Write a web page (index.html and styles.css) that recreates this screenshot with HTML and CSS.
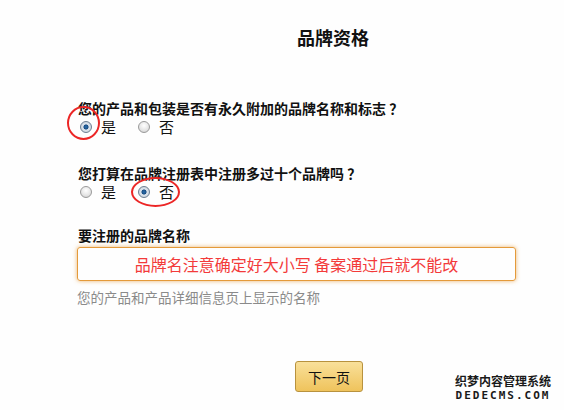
FILE: index.html
```html
<!doctype html>
<html lang="zh-CN">
<head>
    <meta charset="UTF-8">
    <title>品牌资格</title>
    <link rel="stylesheet" href="styles.css">
</head>
<body>
    <div class="page">
        <h1 class="title">品牌资格</h1>

        <div class="question">
            <p class="ask">您的产品和包装是否有永久附加的品牌名称和标志 ？</p>
            <div class="choices">
                <label class="choice"><span class="radio checked"></span>是</label>
                <label class="choice"><span class="radio"></span>否</label>
                <span class="mark markOne"></span>
            </div>
        </div>

        <div class="question second">
            <p class="ask">您打算在品牌注册表中注册多过十个品牌吗 ？</p>
            <div class="choices">
                <label class="choice"><span class="radio"></span>是</label>
                <label class="choice"><span class="radio checked"></span>否</label>
                <span class="mark markTwo"></span>
            </div>
        </div>

        <div class="field">
            <p class="ask">要注册的品牌名称</p>
            <div class="textBox">品牌名注意确定好大小写 备案通过后就不能改</div>
            <p class="hint">您的产品和产品详细信息页上显示的名称</p>
        </div>

        <div class="actions">
            <button class="next">下一页</button>
        </div>
    </div>

    <div class="logo">
        <span class="logoCn">织梦内容管理系统</span>
        <span class="logoEn">DEDECMS.COM</span>
    </div>
</body>
</html>
```

FILE: styles.css
```css
body{
    margin: 0;
    background-color: #fefefe;
    font-family: "Noto Sans CJK SC", "Liberation Sans", sans-serif;
    color: #111;
}
.page{
    padding: 24px 0 0 78px;
}
.title{
    margin: 0 0 0 219px;
    font-size: 18px;
    line-height: 26px;
    font-weight: bold;
}
.question{
    margin-top: 49px;
}
.question.second{
    margin-top: 27px;
}
.ask{
    margin: 0;
    font-size: 14px;
    line-height: 18px;
    font-weight: bold;
}
.choices{
    position: relative;
    display: flex;
    height: 20px;
    align-items: center;
    margin-left: 2px;
}
.choice{
    display: flex;
    align-items: center;
    width: 58px;
    font-size: 15px;
    line-height: 20px;
}
.radio{
    width: 12px;
    height: 12px;
    margin-right: 9px;
    border-radius: 50%;
    border: 1px solid #9a9a9a;
    background: radial-gradient(circle at 50% 35%, #ffffff 0, #e4e4e4 60%, #c9c9c9 100%);
    box-sizing: border-box;
}
.radio.checked{
    border-color: #6d7f92;
    background: radial-gradient(circle, #2c6fae 0, #1b4f85 30%, #dfe6ee 42%, #bfc8d2 100%);
}
.mark{
    position: absolute;
    border: 2px solid #ec2626;
    border-radius: 50%;
}
.markOne{
    left: -13px;
    top: -11px;
    width: 29px;
    height: 30px;
}
.markTwo{
    left: 51px;
    top: -5px;
    width: 45px;
    height: 26px;
}
.field{
    margin-top: 24px;
}
.textBox{
    width: 439px;
    height: 34px;
    margin: 3px 0 0 -1px;
    border: 1px solid #e49a3a;
    border-radius: 3px;
    box-shadow: 0 0 4px rgba(228, 150, 50, 0.7);
    box-sizing: border-box;
    text-align: center;
    font-size: 16px;
    line-height: 32px;
    color: #f33a3a;
}
.hint{
    margin: 7px 0 0 -1px;
    font-size: 13.5px;
    line-height: 18px;
    color: #8a8a8a;
}
.actions{
    margin: 55px 0 0 217px;
}
.next{
    width: 68px;
    height: 31px;
    padding: 0;
    border: 1px solid #b8923e;
    border-radius: 3px;
    background: linear-gradient(#f9e09a, #efc35c);
    font-family: inherit;
    font-size: 14px;
    color: #111;
}
.logo{
    position: absolute;
    left: 455px;
    top: 374px;
    display: flex;
    flex-direction: column;
    align-items: center;
    gap: 2px;
    font-weight: bold;
    color: #1a1a1a;
    text-shadow: 1px 0 #fff, -1px 0 #fff, 0 1px #fff, 0 -1px #fff;
}
.logoCn{
    font-size: 12px;
    line-height: 14px;
}
.logoEn{
    font-family: "DejaVu Sans Mono", monospace;
    font-size: 11px;
    line-height: 11px;
    letter-spacing: 2px;
}
```
